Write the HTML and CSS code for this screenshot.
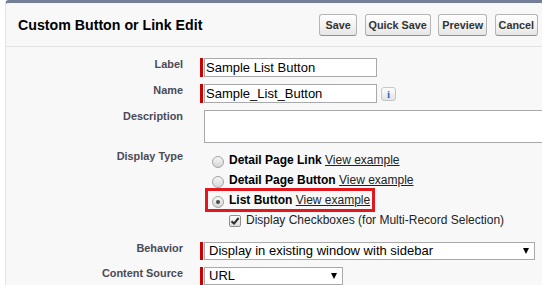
FILE: index.html
```html
<!DOCTYPE html>
<html lang="en">
<head>
    <meta charset="UTF-8">
    <title>Custom Button or Link Edit</title>
    <link rel="stylesheet" href="styles.css">
</head>
<body>
    <div class="panel">
        <div class="panel-header">
            <h2 class="title">Custom Button or Link Edit</h2>
            <div class="buttons">
                <button class="btn btn-save">Save</button>
                <button class="btn">Quick Save</button>
                <button class="btn">Preview</button>
                <button class="btn">Cancel</button>
            </div>
        </div>

        <div class="panel-body">
            <div class="row">
                <div class="label">Label</div>
                <div class="field required">
                    <input class="text-input" type="text" value="Sample List Button">
                </div>
            </div>
            <div class="row">
                <div class="label">Name</div>
                <div class="field required">
                    <input class="text-input" type="text" value="Sample_List_Button">
                    <span class="info-icon">i</span>
                </div>
            </div>
            <div class="row">
                <div class="label">Description</div>
                <div class="field">
                    <textarea class="text-area"></textarea>
                </div>
            </div>

            <!-- display type -->
            <div class="row row-types">
                <div class="label">Display Type</div>
                <div class="field field-list">
                    <div class="option">
                        <span class="radio"></span>
                        <b>Detail Page Link</b>&nbsp;<a href="#">View example</a>
                    </div>
                    <div class="option">
                        <span class="radio"></span>
                        <b>Detail Page Button</b>&nbsp;<a href="#">View example</a>
                    </div>
                    <div class="option highlight">
                        <span class="radio checked"></span>
                        <b>List Button</b>&nbsp;<a href="#">View example</a>
                    </div>
                    <div class="check-row">
                        <span class="checkbox">
                            <svg width="10" height="10" viewBox="0 0 10 10"><path d="M1.5 5.2 L4 7.6 L8.6 2" fill="none" stroke="#2b2b2b" stroke-width="2"/></svg>
                        </span>
                        Display Checkboxes (for Multi-Record Selection)
                    </div>
                </div>
            </div>

            <div class="row">
                <div class="label">Behavior</div>
                <div class="field required">
                    <div class="select select-wide">
                        <span>Display in existing window with sidebar</span>
                        <span class="arrow"></span>
                    </div>
                </div>
            </div>
            <div class="row">
                <div class="label">Content Source</div>
                <div class="field required">
                    <div class="select select-short">
                        <span>URL</span>
                        <span class="arrow"></span>
                    </div>
                </div>
            </div>
        </div>
    </div>
</body>
</html>
```

FILE: styles.css
```css
html, body {
    overflow: hidden;
}
body {
    margin: 0;
    background: #fff;
    font-family: "Liberation Sans", Arial, sans-serif;
    font-size: 12px;
    color: #000;
}
.panel {
    margin-left: 5px;
    border-top: 3px solid #747e96;
    border-left: 1px solid #e0e3e5;
    border-radius: 4px 0 0 0;
    background: #f8f8f8;
}
/* header */
.panel-header {
    display: flex;
    align-items: center;
    justify-content: space-between;
    height: 43px;
    padding: 0 4px 0 12px;
    border-bottom: 1px solid #e0e3e5;
}
.title {
    margin: 0;
    font-size: 14.2px;
    font-weight: bold;
    color: #000;
}
.buttons {
    display: flex;
    gap: 7.5px;
}
.btn {
    height: 22px;
    padding: 0 3px;
    border: 1px solid #b5b5b5;
    border-bottom-color: #8f8f8f;
    border-radius: 3px;
    background: linear-gradient(#ffffff, #f3f3f3 50%, #e6e6e6);
    font-family: "Liberation Sans", Arial, sans-serif;
    font-size: 10.8px;
    font-weight: bold;
    color: #333;
}
.btn-save {
    min-width: 38px;
}
/* form */
.panel-body {
    padding-top: 11px;
}
.row {
    display: flex;
    margin-bottom: 7px;
}
.label {
    flex: none;
    width: 177px;
    margin-right: 17px;
    text-align: right;
    font-size: 10.9px;
    font-weight: bold;
    line-height: 13px;
    color: #4a4a56;
}
.field {
    flex: none;
    display: flex;
    align-items: center;
    padding-left: 4px;
}
.field.required {
    border-left: 3px solid #c00;
    padding-left: 1px;
}
.text-input {
    box-sizing: border-box;
    width: 173px;
    height: 19px;
    margin: 0;
    padding: 0 1px;
    border: 1px solid #a9a9a9;
    background: #fff;
    font-family: "Liberation Sans", Arial, sans-serif;
    font-size: 13px;
    color: #000;
}
.info-icon {
    box-sizing: border-box;
    width: 15px;
    height: 14px;
    margin-left: 4px;
    border: 1px solid #c6c6c6;
    border-radius: 3px;
    background: linear-gradient(#fdfdfd, #e4e4e4);
    font-family: "Liberation Serif", serif;
    font-size: 11px;
    font-weight: bold;
    line-height: 12px;
    text-align: center;
    color: #1f6fd0;
}
.text-area {
    box-sizing: border-box;
    width: 360px;
    height: 33px;
    margin: 0;
    border: 1px solid #a9a9a9;
    background: #fff;
    resize: none;
}
/* display type options */
.row-types {
    margin-bottom: 13px;
}
.field-list {
    display: block;
    padding-top: 1px;
}
.option {
    display: flex;
    align-items: flex-start;
    width: fit-content;
    height: 18px;
    margin: 0 0 2px 4px;
    padding: 0 2px 0 4px;
    line-height: 18px;
    white-space: nowrap;
}
.option b {
    color: #000;
}
.option a {
    color: #222;
    text-decoration: underline;
}
.highlight {
    outline: 3px solid #e2181f;
}
.radio {
    box-sizing: border-box;
    position: relative;
    width: 12px;
    height: 12px;
    margin: 5px 5px 0 0;
    border: 1px solid #a3a3a3;
    border-radius: 50%;
    background: linear-gradient(#f6f6f6, #d6d6d6);
}
.radio.checked::after {
    content: "";
    position: absolute;
    left: 3px;
    top: 3px;
    width: 4px;
    height: 4px;
    border-radius: 50%;
    background: #4a4a4a;
}
.check-row {
    display: flex;
    align-items: flex-start;
    height: 18px;
    margin: 1px 0 0 25px;
    line-height: 18px;
    color: #222;
    white-space: nowrap;
}
.checkbox {
    box-sizing: border-box;
    display: flex;
    align-items: center;
    justify-content: center;
    width: 12px;
    height: 12px;
    margin: 4px 5px 0 0;
    border: 1px solid #8f8f8f;
    border-radius: 2px;
    background: linear-gradient(#fdfdfd, #dcdcdc);
}
/* selects */
.select {
    box-sizing: border-box;
    display: flex;
    align-items: center;
    justify-content: space-between;
    height: 18px;
    padding: 0 5px 0 4px;
    border: 1px solid #a9a9a9;
    background: #fff;
    font-size: 13px;
    line-height: 16px;
    color: #000;
}
.select-wide {
    width: 331px;
}
.select-short {
    width: 139px;
}
.arrow {
    width: 0;
    height: 0;
    border-left: 3.5px solid transparent;
    border-right: 3.5px solid transparent;
    border-top: 6px solid #000;
}
```
